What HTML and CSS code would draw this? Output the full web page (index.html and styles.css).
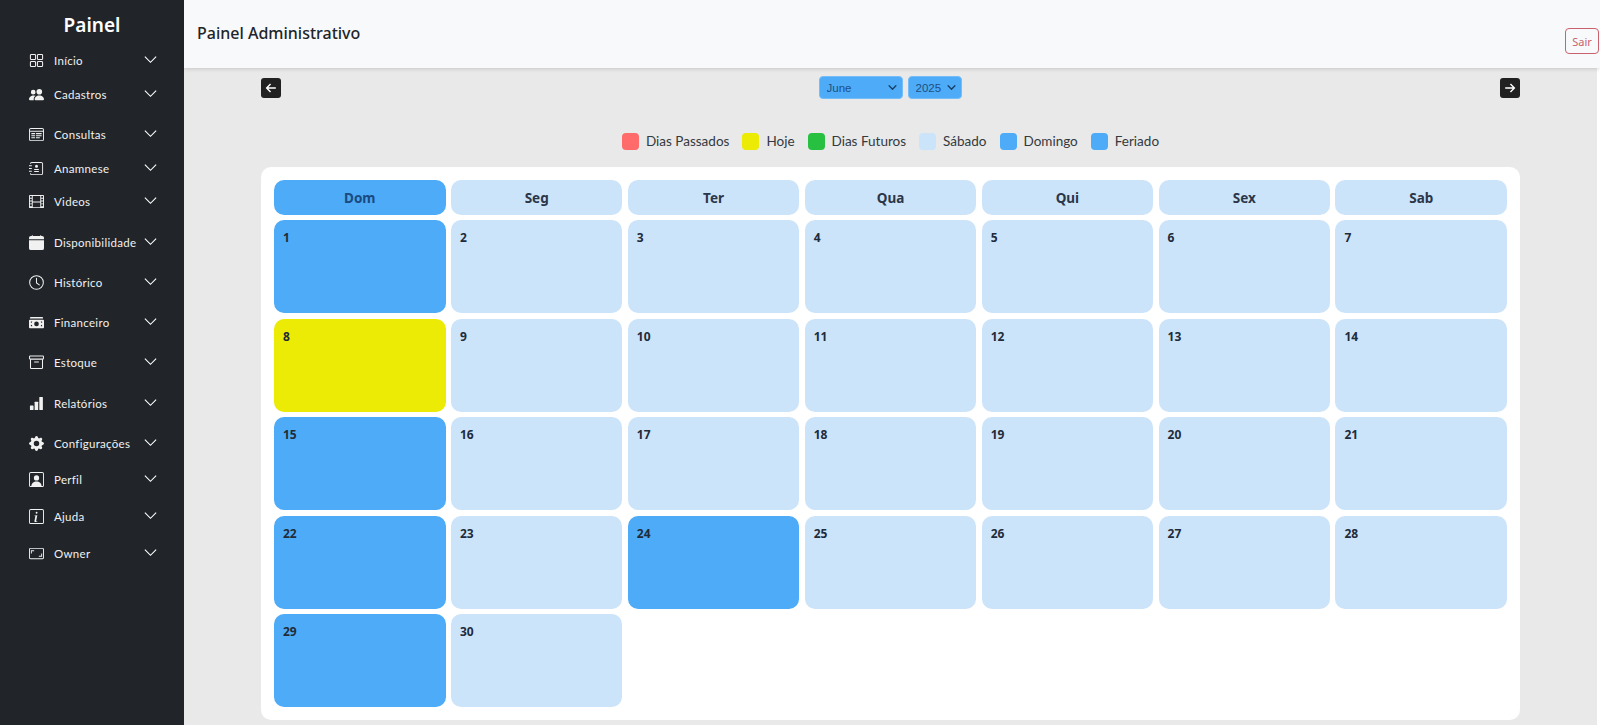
FILE: index.html
```html
<!DOCTYPE html>
<html lang="pt-BR">
<head>
    <meta charset="UTF-8">
    <meta name="viewport" content="width=device-width, initial-scale=1.0">
    <title>Painel Administrativo</title>
    <link rel="stylesheet" href="styles.css">
</head>
<body>
    <div class="layout">
        <!-- Menu lateral -->
        <aside class="sidebar">
            <h2 class="brand">Painel</h2>
            <nav class="menu">
                <a class="menu-item row-34">
                    <svg class="menu-icon" viewBox="0 0 16 16" fill="none" stroke="currentColor" stroke-width="1.1"><rect x="1.5" y="1.5" width="5.500" height="5.500" rx="1"/><rect x="9" y="1.5" width="5.500" height="5.500" rx="1"/><rect x="1.5" y="9" width="5.500" height="5.500" rx="1"/><rect x="9" y="9" width="5.500" height="5.500" rx="1"/></svg>
                    <span class="menu-label">Início</span>
                    <svg class="chevron" viewBox="0 0 16 16"><path d="M2 5l6 6 6-6"/></svg>
                </a>
                <a class="menu-item row-40">
                    <svg class="menu-icon" viewBox="0 0 16 16" fill="currentColor"><path d="M7 14s-1 0-1-1 1-4 5-4 5 3 5 4-1 1-1 1zm4-6a3 3 0 1 0 0-6 3 3 0 0 0 0 6m-5.784 6A2.24 2.24 0 0 1 5 13c0-1.355.68-2.75 1.936-3.72A6.3 6.3 0 0 0 5 9c-4 0-5 3-5 4s1 1 1 1zM4.5 8a2.5 2.5 0 1 0 0-5 2.5 2.5 0 0 0 0 5"/></svg>
                    <span class="menu-label">Cadastros</span>
                    <svg class="chevron" viewBox="0 0 16 16"><path d="M2 5l6 6 6-6"/></svg>
                </a>
                <a class="menu-item row-33">
                    <svg class="menu-icon" viewBox="0 0 16 16" fill="currentColor"><path d="M2 1h12a2 2 0 0 1 2 2v10a2 2 0 0 1-2 2H2a2 2 0 0 1-2-2V3a2 2 0 0 1 2-2m0 1a1 1 0 0 0-1 1v1h14V3a1 1 0 0 0-1-1zM1 5v8a1 1 0 0 0 1 1h12a1 1 0 0 0 1-1V5z"/><path d="M2.5 6.5h4v1.2h-4zM7.5 6.5h6v1.2h-6zM2.5 8.7h4v1.2h-4zM7.5 8.7h6v1.2h-6zM2.5 10.9h4v1.2h-4zM7.5 10.9h4v1.2h-4z"/></svg>
                    <span class="menu-label">Consultas</span>
                    <svg class="chevron" viewBox="0 0 16 16"><path d="M2 5l6 6 6-6"/></svg>
                </a>
                <a class="menu-item row-33">
                    <svg class="menu-icon" viewBox="0 0 16 16" fill="currentColor"><path d="M3 1h10a2 2 0 0 1 2 2v10a2 2 0 0 1-2 2H3a2 2 0 0 1-2-2h1a1 1 0 0 0 1 1h10a1 1 0 0 0 1-1V3a1 1 0 0 0-1-1H3a1 1 0 0 0-1 1H1a2 2 0 0 1 2-2"/><path d="M0 4.5h3v1H0zM0 7.5h3v1H0zM0 10.5h3v1H0zM8 4a1.6 1.6 0 1 1 0 3.2A1.6 1.6 0 0 1 8 4M5.5 8.6h5v1h-5zM5.5 10.6h5v1h-5z"/></svg>
                    <span class="menu-label">Anamnese</span>
                    <svg class="chevron" viewBox="0 0 16 16"><path d="M2 5l6 6 6-6"/></svg>
                </a>
                <a class="menu-item row-40">
                    <svg class="menu-icon" viewBox="0 0 16 16" fill="currentColor"><path d="M0 2a1 1 0 0 1 1-1h14a1 1 0 0 1 1 1v12a1 1 0 0 1-1 1H1a1 1 0 0 1-1-1zm4 0v6h8V2zm8 7H4v5h8zM1 2v2h2V2zm2 3H1v2h2zM1 8v2h2V8zm2 3H1v2h2zm10-9v2h2V2zm2 3h-2v2h2zm-2 3v2h2V8zm2 3h-2v2h2z"/></svg>
                    <span class="menu-label">Videos</span>
                    <svg class="chevron" viewBox="0 0 16 16"><path d="M2 5l6 6 6-6"/></svg>
                </a>
                <a class="menu-item row-40">
                    <svg class="menu-icon" viewBox="0 0 16 16" fill="currentColor"><path d="M3.5 0a.5.5 0 0 1 .5.5V1h8V.5a.5.5 0 0 1 1 0V1h1a2 2 0 0 1 2 2v1.5H0V3a2 2 0 0 1 2-2h1V.5a.5.5 0 0 1 .5-.5M0 5.500h16V14a2 2 0 0 1-2 2H2a2 2 0 0 1-2-2z"/></svg>
                    <span class="menu-label">Disponibilidade</span>
                    <svg class="chevron" viewBox="0 0 16 16"><path d="M2 5l6 6 6-6"/></svg>
                </a>
                <a class="menu-item row-40">
                    <svg class="menu-icon" viewBox="0 0 16 16" fill="none" stroke="currentColor" stroke-width="1.1"><circle cx="8" cy="8" r="7.300"/><path d="M8 3.500V8.500l3 2" stroke-linecap="round"/></svg>
                    <span class="menu-label">Histórico</span>
                    <svg class="chevron" viewBox="0 0 16 16"><path d="M2 5l6 6 6-6"/></svg>
                </a>
                <a class="menu-item row-40">
                    <svg class="menu-icon" viewBox="0 0 16 16" fill="currentColor"><path d="M1 3a1 1 0 0 1 1-1h12a1 1 0 0 1 1 1v.6H1z"/><path fill-rule="evenodd" d="M1 5h14a1 1 0 0 1 1 1v7a1 1 0 0 1-1 1H1a1 1 0 0 1-1-1V6a1 1 0 0 1 1-1m7 2a2.500 2.500 0 1 0 0 5 2.500 2.500 0 0 0 0-5M2 7v1.500A1.500 1.500 0 0 0 3.500 7zm12 0h-1.500A1.500 1.500 0 0 0 14 8.500zM2 12h1.500A1.500 1.500 0 0 0 2 10.500zm12 0v-1.500A1.500 1.500 0 0 0 12.500 12z"/></svg>
                    <span class="menu-label">Financeiro</span>
                    <svg class="chevron" viewBox="0 0 16 16"><path d="M2 5l6 6 6-6"/></svg>
                </a>
                <a class="menu-item row-40">
                    <svg class="menu-icon" viewBox="0 0 16 16" fill="none" stroke="currentColor" stroke-width="1.1"><rect x=".6" y="1.100" width="14.800" height="3.300" rx=".6"/><path d="M1.600 4.400V13.500a1 1 0 0 0 1 1h10.800a1 1 0 0 0 1-1V4.400M5.500 7.500h5"/></svg>
                    <span class="menu-label">Estoque</span>
                    <svg class="chevron" viewBox="0 0 16 16"><path d="M2 5l6 6 6-6"/></svg>
                </a>
                <a class="menu-item row-40">
                    <svg class="menu-icon" viewBox="0 0 16 16" fill="currentColor"><rect x="1" y="10" width="3.800" height="5" rx=".6"/><rect x="6" y="6" width="3.800" height="9" rx=".6"/><rect x="11" y="1" width="3.800" height="14" rx=".6"/></svg>
                    <span class="menu-label">Relatórios</span>
                    <svg class="chevron" viewBox="0 0 16 16"><path d="M2 5l6 6 6-6"/></svg>
                </a>
                <a class="menu-item row-36">
                    <svg class="menu-icon" viewBox="0 0 16 16" fill="currentColor"><path d="M9.405 1.050c-.413-1.400-2.397-1.400-2.810 0l-.100.340a1.464 1.464 0 0 1-2.105.872l-.310-.170c-1.283-.698-2.686.705-1.987 1.987l.169.311c.446.820.023 1.841-.872 2.105l-.340.100c-1.400.413-1.400 2.397 0 2.810l.340.100a1.464 1.464 0 0 1 .872 2.105l-.170.310c-.698 1.283.705 2.686 1.987 1.987l.311-.169a1.464 1.464 0 0 1 2.105.872l.100.340c.413 1.400 2.397 1.400 2.810 0l.100-.340a1.464 1.464 0 0 1 2.105-.872l.310.170c1.283.698 2.686-.705 1.987-1.987l-.169-.311a1.464 1.464 0 0 1 .872-2.105l.340-.100c1.400-.413 1.400-2.397 0-2.810l-.340-.100a1.464 1.464 0 0 1-.872-2.105l.170-.310c.698-1.283-.705-2.686-1.987-1.987l-.311.169a1.464 1.464 0 0 1-2.105-.872zM8 10.930a2.929 2.929 0 1 1 0-5.860 2.929 2.929 0 0 1 0 5.858z"/></svg>
                    <span class="menu-label">Configurações</span>
                    <svg class="chevron" viewBox="0 0 16 16"><path d="M2 5l6 6 6-6"/></svg>
                </a>
                <a class="menu-item row-37">
                    <svg class="menu-icon" viewBox="0 0 16 16" fill="currentColor"><path d="M2 0h12a2 2 0 0 1 2 2v12a2 2 0 0 1-2 2H2a2 2 0 0 1-2-2V2a2 2 0 0 1 2-2m0 1a1 1 0 0 0-1 1v12a1 1 0 0 0 1 1h12a1 1 0 0 0 1-1V2a1 1 0 0 0-1-1z"/><path d="M8 3.500a2.800 2.800 0 1 1 0 5.600 2.800 2.800 0 0 1 0-5.600M2.500 15c0-3 2.500-5 5.500-5s5.500 2 5.500 5z"/></svg>
                    <span class="menu-label">Perfil</span>
                    <svg class="chevron" viewBox="0 0 16 16"><path d="M2 5l6 6 6-6"/></svg>
                </a>
                <a class="menu-item row-37">
                    <svg class="menu-icon" viewBox="0 0 16 16" fill="currentColor"><path d="M2 0h12a2 2 0 0 1 2 2v12a2 2 0 0 1-2 2H2a2 2 0 0 1-2-2V2a2 2 0 0 1 2-2m0 1a1 1 0 0 0-1 1v12a1 1 0 0 0 1 1h12a1 1 0 0 0 1-1V2a1 1 0 0 0-1-1z"/><path d="M8.900 6.600l-1.300 6.100c-.1.400 0 .5.300.5l.9-.1-.1.700-2 .2c-.7 0-1-.4-.9-1.100l1-5.200-.9-.1.100-.7zM8.100 3a1 1 0 1 1 0 2 1 1 0 0 1 0-2"/></svg>
                    <span class="menu-label">Ajuda</span>
                    <svg class="chevron" viewBox="0 0 16 16"><path d="M2 5l6 6 6-6"/></svg>
                </a>
                <a class="menu-item row-37">
                    <svg class="menu-icon" viewBox="0 0 16 16" fill="currentColor"><path d="M1.500 2h13A1.500 1.500 0 0 1 16 3.500v9a1.500 1.500 0 0 1-1.500 1.500h-13A1.500 1.500 0 0 1 0 12.500v-9A1.500 1.500 0 0 1 1.500 2m0 1a.5.5 0 0 0-.5.5v9a.5.5 0 0 0 .5.5h13a.5.5 0 0 0 .5-.5v-9a.5.5 0 0 0-.5-.5z"/><path d="M2 4.500h3.500v1H3V8H2zM14 11.500h-3.500v-1H13V8h1z"/></svg>
                    <span class="menu-label">Owner</span>
                    <svg class="chevron" viewBox="0 0 16 16"><path d="M2 5l6 6 6-6"/></svg>
                </a>
            </nav>
        </aside>

        <div class="main">
            <header class="topbar">
                <h1 class="page-title">Painel Administrativo</h1>
                <button class="logout-btn">Sair</button>
            </header>

            <section class="content">
                <!-- Navegação do mês -->
                <div class="month-nav">
                    <button class="arrow-btn">
                        <svg viewBox="0 0 16 16"><path d="M13.500 8H3M7.500 3.500L3 8l4.500 4.500"/></svg>
                    </button>
                    <div class="month-selects">
                        <select class="month-select">
                            <option>June</option>
                        </select>
                        <select class="month-select">
                            <option>2025</option>
                        </select>
                    </div>
                    <button class="arrow-btn">
                        <svg viewBox="0 0 16 16"><path d="M2.500 8H13M8.500 3.500L13 8l-4.500 4.500"/></svg>
                    </button>
                </div>

                <!-- Legenda -->
                <div class="legend">
                    <div class="legend-item"><span class="swatch past"></span>Dias Passados</div>
                    <div class="legend-item"><span class="swatch today"></span>Hoje</div>
                    <div class="legend-item"><span class="swatch future"></span>Dias Futuros</div>
                    <div class="legend-item"><span class="swatch weekday"></span>Sábado</div>
                    <div class="legend-item"><span class="swatch holiday"></span>Domingo</div>
                    <div class="legend-item"><span class="swatch holiday"></span>Feriado</div>
                </div>

                <div class="calendar">
                    <div class="weekday-head sunday">Dom</div>
                    <div class="weekday-head">Seg</div>
                    <div class="weekday-head">Ter</div>
                    <div class="weekday-head">Qua</div>
                    <div class="weekday-head">Qui</div>
                    <div class="weekday-head">Sex</div>
                    <div class="weekday-head">Sab</div>

                    <div class="day holiday">1</div>
                    <div class="day">2</div>
                    <div class="day">3</div>
                    <div class="day">4</div>
                    <div class="day">5</div>
                    <div class="day">6</div>
                    <div class="day">7</div>

                    <div class="day today">8</div>
                    <div class="day">9</div>
                    <div class="day">10</div>
                    <div class="day">11</div>
                    <div class="day">12</div>
                    <div class="day">13</div>
                    <div class="day">14</div>

                    <div class="day holiday">15</div>
                    <div class="day">16</div>
                    <div class="day">17</div>
                    <div class="day">18</div>
                    <div class="day">19</div>
                    <div class="day">20</div>
                    <div class="day">21</div>

                    <div class="day holiday">22</div>
                    <div class="day">23</div>
                    <div class="day holiday">24</div>
                    <div class="day">25</div>
                    <div class="day">26</div>
                    <div class="day">27</div>
                    <div class="day">28</div>

                    <div class="day holiday">29</div>
                    <div class="day">30</div>
                </div>
            </section>
        </div>
    </div>
</body>
</html>
```

FILE: styles.css
```css
* {
    margin: 0;
    padding: 0;
    box-sizing: border-box;
}

body, html {
    width: 100%;
    height: 100%;
    overflow: hidden;
    font-family: "Noto Sans", "Open Sans", sans-serif;
}

.layout {
    display: flex;
    height: 100vh;
}

/* Menu lateral */
.sidebar {
    width: 184px;
    flex-shrink: 0;
    background-color: #212529;
    color: #ffffff;
    padding-top: 11px;
}

.brand {
    font-size: 19px;
    font-weight: 600;
    line-height: 28px;
    text-align: center;
    margin-bottom: 13px;
}

.menu-item {
    display: flex;
    align-items: flex-start;
    padding-left: 29px;
    color: #f1f1f1;
}

.row-33 { height: 33.5px; }
.row-34 { height: 34px; }
.row-36 { height: 36px; }
.row-37 { height: 37px; }
.row-40 { height: 40.3px; }

.menu-icon {
    width: 15px;
    height: 15px;
    flex-shrink: 0;
    margin-top: 1px;
}

.menu-label {
    margin-left: 10px;
    width: 82px;
    font-family: Lato, "Noto Sans", sans-serif;
    font-size: 11.5px;
    line-height: 18px;
    letter-spacing: 0.3px;
    white-space: nowrap;
}

.chevron {
    width: 15px;
    height: 15px;
    margin-left: 7px;
    fill: none;
    stroke: #ffffff;
    stroke-width: 1.200;
}

/* Conteudo */
.main {
    flex: 1;
    min-width: 0;
    display: flex;
    flex-direction: column;
    background-color: #ffffff;
}

.topbar {
    height: 68px;
    flex-shrink: 0;
    display: flex;
    justify-content: space-between;
    align-items: flex-start;
    padding: 21px 1px 0 13px;
    background-color: #f8f9fa;
    box-shadow: 0 1px 4px rgba(0, 0, 0, 0.15);
    position: relative;
}

.page-title {
    font-size: 16px;
    font-weight: 500;
    line-height: 24px;
    color: #212529;
}

.logout-btn {
    margin-top: 7px;
    width: 34px;
    height: 26px;
    background: transparent;
    border: 1px solid #c9616f;
    border-radius: 4px;
    color: #c9616f;
    font-family: inherit;
    font-size: 11px;
}

.content {
    flex: 1;
    margin-right: 3px;
    padding: 8px 77px 0 77px;
    background-color: #e9e9e9;
}

.month-nav {
    display: flex;
    justify-content: space-between;
    align-items: center;
}

.arrow-btn {
    width: 20px;
    height: 20px;
    display: flex;
    align-items: center;
    justify-content: center;
    background-color: #212121;
    border: none;
    border-radius: 3px;
}

.arrow-btn svg {
    width: 14px;
    height: 14px;
    fill: none;
    stroke: #ffffff;
    stroke-width: 1.6;
}

.month-selects {
    display: flex;
    gap: 5px;
    margin-right: 1px;
}

.month-select {
    height: 23px;
    padding-left: 7px;
    appearance: none;
    background-color: #4dabf7;
    background-image: url("data:image/svg+xml,%3csvg xmlns='http://www.w3.org/2000/svg' viewBox='0 0 16 16'%3e%3cpath fill='none' stroke='%23173f68' stroke-linecap='round' stroke-linejoin='round' stroke-width='2.400' d='m2 5 6 6 6-6'/%3e%3c/svg%3e");
    background-repeat: no-repeat;
    background-position: right 5px center;
    background-size: 9px 9px;
    border: 1px solid #74bdf8;
    border-radius: 4px;
    color: #1d4f82;
    font-family: "Liberation Sans", sans-serif;
    font-size: 11.5px;
}

.month-select:first-child {
    width: 84px;
}

.month-select:last-child {
    width: 54px;
}

.legend {
    display: flex;
    justify-content: center;
    gap: 13px;
    margin-top: 32px;
    height: 20px;
    color: #333a40;
    font-family: Lato, "Noto Sans", sans-serif;
    font-size: 13.5px;
    line-height: 20px;
}

.legend-item {
    display: flex;
    align-items: center;
    gap: 7px;
}

.swatch {
    width: 17px;
    height: 17px;
    border-radius: 4px;
}

.swatch.past { background-color: #ff6b6b; }
.swatch.today { background-color: #ebeb05; }
.swatch.future { background-color: #28c040; }
.swatch.weekday { background-color: #cce4fa; }
.swatch.holiday { background-color: #4dabf7; }

.calendar {
    display: grid;
    grid-template-columns: repeat(7, 1fr);
    grid-template-rows: 35px repeat(5, 93px);
    gap: 5.4px;
    margin-top: 16px;
    padding: 13px;
    background-color: #ffffff;
    border-radius: 10px;
}

.weekday-head {
    display: flex;
    align-items: center;
    justify-content: center;
    background-color: #cce4fa;
    border-radius: 10px;
    color: #2b3648;
    font-size: 13.5px;
    font-weight: 700;
}

.weekday-head.sunday {
    background-color: #4dabf7;
    color: #1a4a80;
}

.day {
    padding: 10px 9px;
    background-color: #cce4fa;
    border-radius: 10px;
    color: #212b3a;
    font-size: 12px;
    font-weight: 700;
    line-height: 16px;
}

.day.holiday { background-color: #4dabf7; }
.day.today { background-color: #ebeb05; }
```
